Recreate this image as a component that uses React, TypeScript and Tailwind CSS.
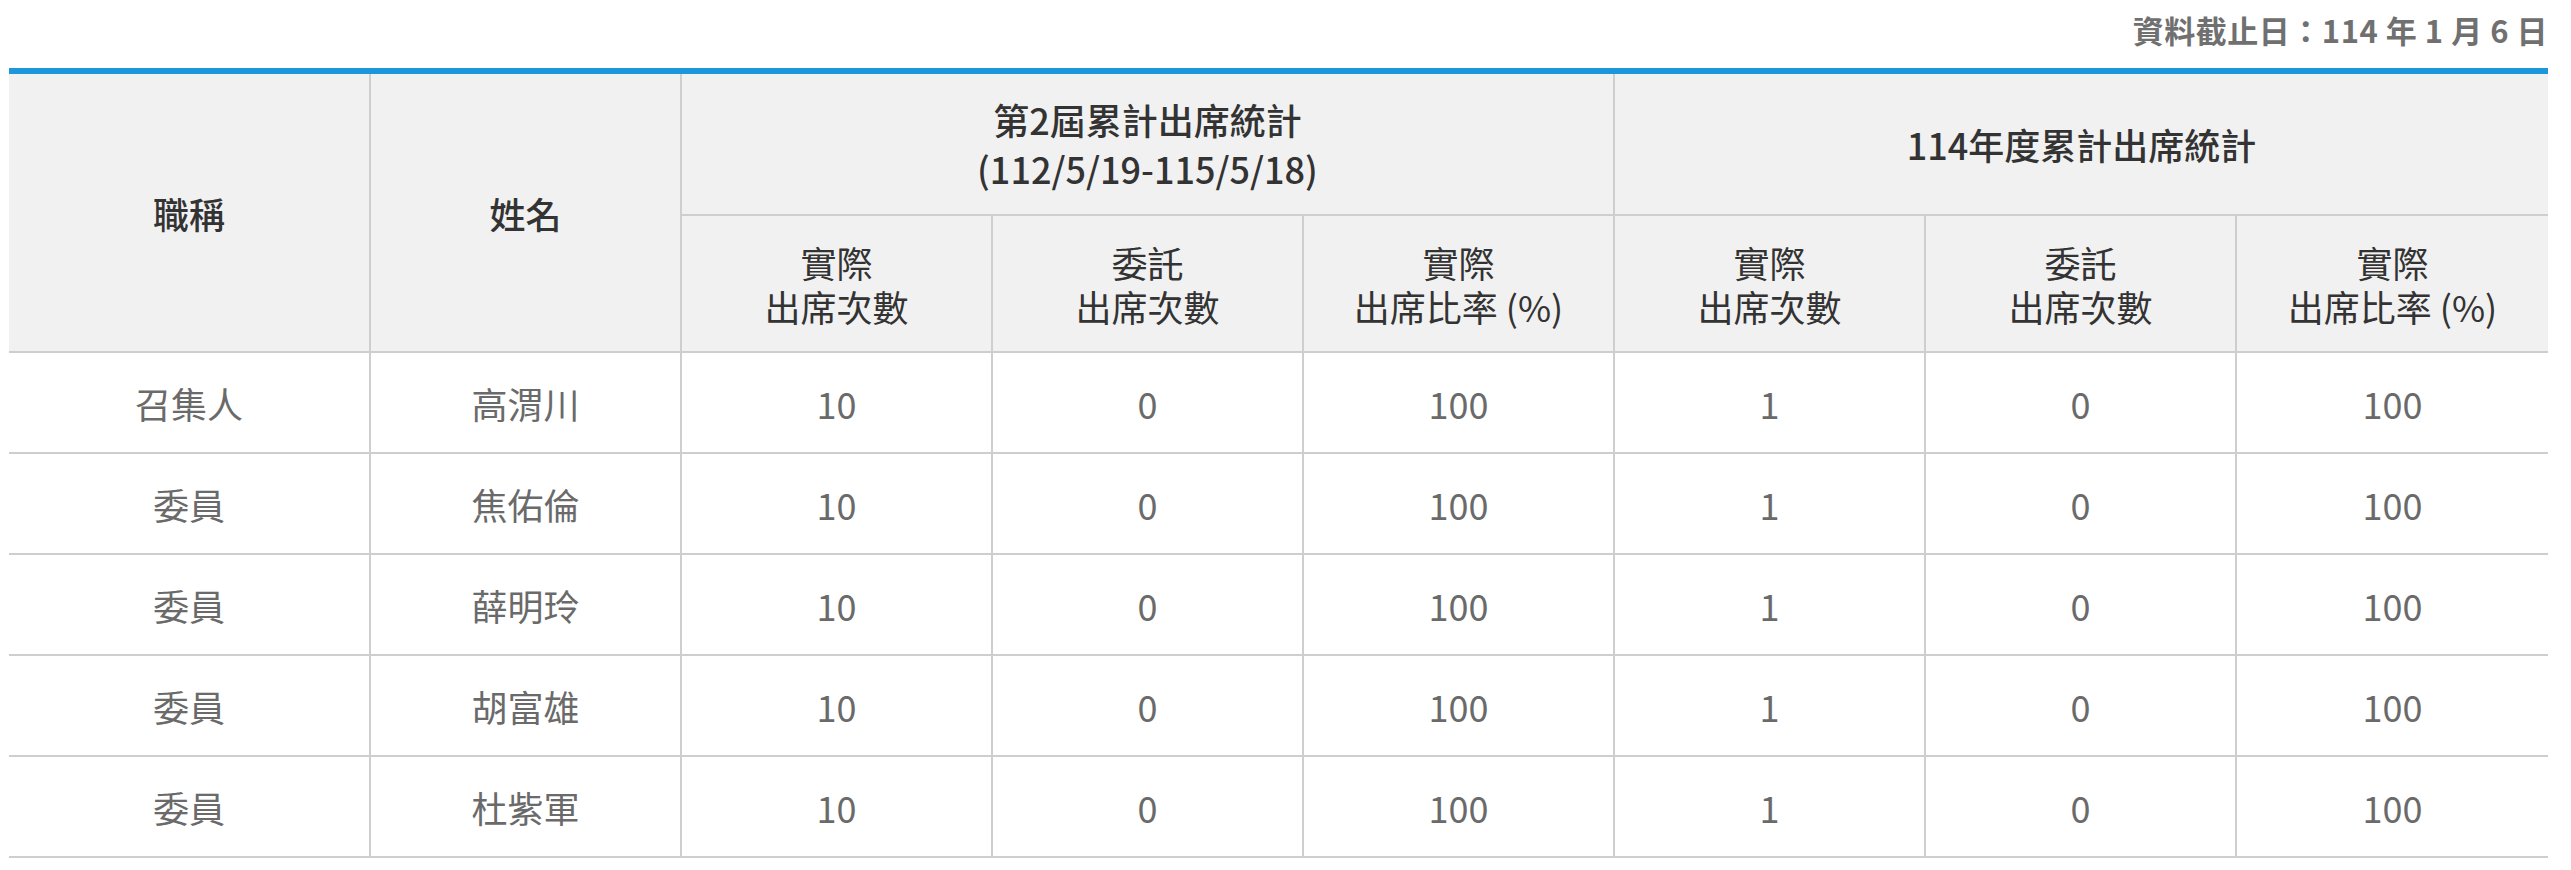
import React from "react";

const rows = [
  { title: "召集人", name: "高渭川", a: "10", b: "0", c: "100", d: "1", e: "0", f: "100" },
  { title: "委員", name: "焦佑倫", a: "10", b: "0", c: "100", d: "1", e: "0", f: "100" },
  { title: "委員", name: "薛明玲", a: "10", b: "0", c: "100", d: "1", e: "0", f: "100" },
  { title: "委員", name: "胡富雄", a: "10", b: "0", c: "100", d: "1", e: "0", f: "100" },
  { title: "委員", name: "杜紫軍", a: "10", b: "0", c: "100", d: "1", e: "0", f: "100" },
];

const subHeads = [
  ["實際", "出席次數"],
  ["委託", "出席次數"],
  ["實際", "出席比率 (%)"],
];

export default function App() {
  return (
    <div className="min-h-screen bg-white font-['Noto_Sans_CJK_TC','Noto_Sans',sans-serif]">
      <div className="ml-[9px] w-[2539px]">
        <div className="pt-[8px] pb-[17px] text-right text-[31px] leading-[43px] tracking-[0.5px] font-bold text-[#707070]">
          資料截止日：114 年 1 月 6 日
        </div>

        <div className="border-t-[6px] border-[#1e96dc]">
          <table className="w-[2539px] table-fixed border-separate border-spacing-0 text-center">
            <colgroup>
              <col className="w-[362px]" />
              <col className="w-[311px]" />
              <col className="w-[311px]" />
              <col className="w-[311px]" />
              <col className="w-[311px]" />
              <col className="w-[311px]" />
              <col className="w-[311px]" />
              <col className="w-[311px]" />
            </colgroup>
            <thead className="bg-[#f1f1f1] text-[#333333]">
              <tr>
                <th rowSpan={2} className="h-[279px] border-r-2 border-b-2 border-[#cecece] text-[36px] font-medium">
                  職稱
                </th>
                <th rowSpan={2} className="border-r-2 border-b-2 border-[#cecece] text-[36px] font-medium">
                  姓名
                </th>
                <th colSpan={3} className="h-[142px] border-r-2 border-b-2 border-[#cecece] text-[36px] leading-[49px] font-medium">
                  第2屆累計出席統計
                  <br />
                  (112/5/19-115/5/18)
                </th>
                <th colSpan={3} className="border-b-2 border-[#cecece] text-[36px] font-medium">
                  114年度累計出席統計
                </th>
              </tr>
              <tr>
                {[0, 1].map((g) =>
                  subHeads.map((s, i) => (
                    <th
                      key={g + "-" + i}
                      className={
                        "h-[137px] border-b-2 border-[#cecece] text-[36px] leading-[44px] font-normal " +
                        (g === 1 && i === 2 ? "" : "border-r-2")
                      }
                    >
                      {s[0]}
                      <br />
                      {s[1]}
                    </th>
                  ))
                )}
              </tr>
            </thead>
            <tbody className="text-[36px] text-[#6a6a6a]">
              {rows.map((r, idx) => (
                <tr key={idx}>
                  <td className="h-[101px] border-r-2 border-b-2 border-[#cecece]">{r.title}</td>
                  <td className="border-r-2 border-b-2 border-[#cecece]">{r.name}</td>
                  <td className="border-r-2 border-b-2 border-[#cecece]">{r.a}</td>
                  <td className="border-r-2 border-b-2 border-[#cecece]">{r.b}</td>
                  <td className="border-r-2 border-b-2 border-[#cecece]">{r.c}</td>
                  <td className="border-r-2 border-b-2 border-[#cecece]">{r.d}</td>
                  <td className="border-r-2 border-b-2 border-[#cecece]">{r.e}</td>
                  <td className="border-b-2 border-[#cecece]">{r.f}</td>
                </tr>
              ))}
            </tbody>
          </table>
        </div>
      </div>
    </div>
  );
}
